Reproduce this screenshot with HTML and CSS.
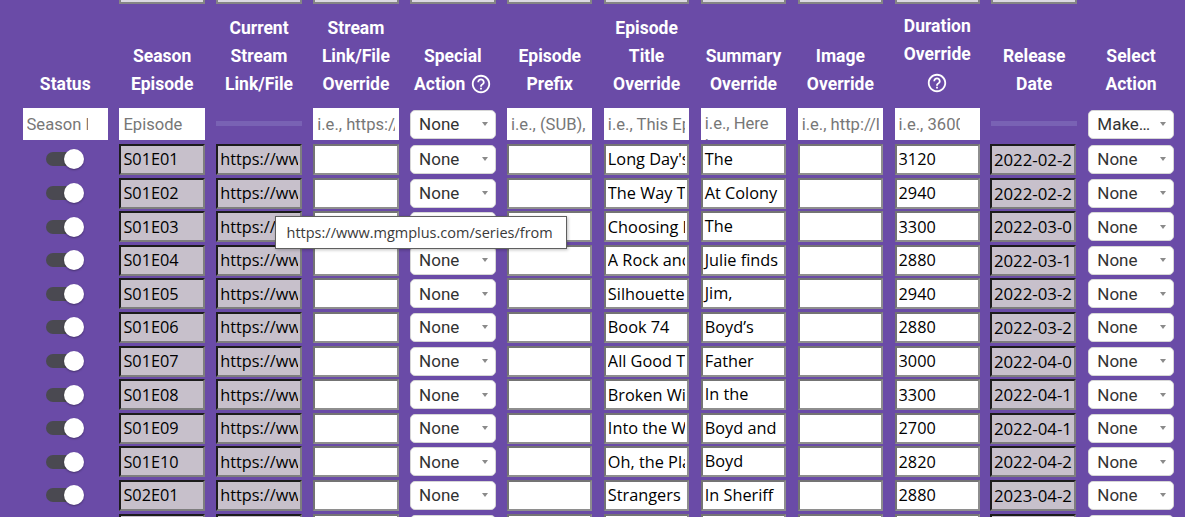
FILE: index.html
```html
<!DOCTYPE html>
<html lang="en">
<head>
<meta charset="utf-8">
<title>Episodes</title>
<link rel="stylesheet" href="styles.css">
</head>
<body>
<div class="table">
  <div class="row stub">
    <div></div>
    <div class="stub-box"></div><div class="stub-box"></div><div class="stub-box"></div><div class="stub-box"></div><div class="stub-box"></div>
    <div class="stub-box"></div><div class="stub-box"></div><div class="stub-box"></div><div class="stub-box"></div><div class="stub-box"></div>
    <div></div>
  </div>

  <div class="row head">
    <div class="th">Status</div>
    <div class="th">Season<br>Episode</div>
    <div class="th">Current<br>Stream<br>Link/File</div>
    <div class="th">Stream<br>Link/File<br>Override</div>
    <div class="th">Special<br>Action <svg class="help" viewBox="0 0 24 24"><path d="M11 18h2v-2h-2v2zm1-16C6.48 2 2 6.48 2 12s4.48 10 10 10 10-4.48 10-10S17.52 2 12 2zm0 18c-4.41 0-8-3.59-8-8s3.59-8 8-8 8 3.59 8 8-3.59 8-8 8zm0-14c-2.21 0-4 1.79-4 4h2c0-1.1.9-2 2-2s2 .9 2 2c0 2-3 1.75-3 5h2c0-2.25 3-2.5 3-5 0-2.21-1.79-4-4-4z"/></svg></div>
    <div class="th">Episode<br>Prefix</div>
    <div class="th">Episode<br>Title<br>Override</div>
    <div class="th">Summary<br>Override</div>
    <div class="th">Image<br>Override</div>
    <div class="th">Duration<br>Override<div class="help-line"><svg class="help" viewBox="0 0 24 24"><path d="M11 18h2v-2h-2v2zm1-16C6.48 2 2 6.48 2 12s4.48 10 10 10 10-4.48 10-10S17.52 2 12 2zm0 18c-4.41 0-8-3.59-8-8s3.59-8 8-8 8 3.59 8 8-3.59 8-8 8zm0-14c-2.21 0-4 1.79-4 4h2c0-1.1.9-2 2-2s2 .9 2 2c0 2-3 1.75-3 5h2c0-2.25 3-2.5 3-5 0-2.21-1.79-4-4-4z"/></svg></div></div>
    <div class="th">Release<br>Date</div>
    <div class="th">Select<br>Action</div>
  </div>

  <div class="row filters">
    <input class="fin num" placeholder="Season Number">
    <input class="fin" placeholder="Episode">
    <div class="bar"></div>
    <input class="fin" placeholder="i.e., https://www.example.com">
    <div class="sel"><span class="sel-text">None</span><span class="caret"></span></div>
    <input class="fin" placeholder="i.e., (SUB), (DUB)">
    <input class="fin" placeholder="i.e., This Episode Title">
    <textarea class="fin fta" placeholder="i.e., Here is a summary"></textarea>
    <input class="fin" placeholder="i.e., http://link.to/image.jpg">
    <input class="fin num" placeholder="i.e., 3600">
    <div class="bar"></div>
    <div class="sel"><span class="sel-text">Make Active</span><span class="caret"></span></div>
  </div>

  <div class="row data">
    <div class="switch"><span class="thumb"></span></div>
    <input class="ro" readonly value="S01E01">
    <input class="ro" readonly value="https://www.mgmplus.com/series/from/s1/e1">
    <input class="in">
    <div class="sel"><span class="sel-text">None</span><span class="caret"></span></div>
    <input class="in">
    <input class="in" value="Long Day's Journey Into Night">
    <textarea class="in ta">The Matthews family takes a detour through a strange town.</textarea>
    <input class="in">
    <input class="in" value="3120">
    <input class="ro date" readonly value="2022-02-20">
    <div class="sel"><span class="sel-text">None</span><span class="caret"></span></div>
  </div>
  <div class="row data">
    <div class="switch"><span class="thumb"></span></div>
    <input class="ro" readonly value="S01E02">
    <input class="ro" readonly value="https://www.mgmplus.com/series/from/s1/e2">
    <input class="in">
    <div class="sel"><span class="sel-text">None</span><span class="caret"></span></div>
    <input class="in">
    <input class="in" value="The Way Things Are Now">
    <textarea class="in ta">At Colony House, the Matthews family settles in.</textarea>
    <input class="in">
    <input class="in" value="2940">
    <input class="ro date" readonly value="2022-02-27">
    <div class="sel"><span class="sel-text">None</span><span class="caret"></span></div>
  </div>
  <div class="row data">
    <div class="switch"><span class="thumb"></span></div>
    <input class="ro" readonly value="S01E03">
    <input class="ro" readonly value="https://www.mgmplus.com/series/from/s1/e3">
    <input class="in">
    <div class="sel"><span class="sel-text">None</span><span class="caret"></span></div>
    <input class="in">
    <input class="in" value="Choosing Day">
    <textarea class="in ta">The townspeople gather for a long-held tradition.</textarea>
    <input class="in">
    <input class="in" value="3300">
    <input class="ro date" readonly value="2022-03-06">
    <div class="sel"><span class="sel-text">None</span><span class="caret"></span></div>
  </div>
  <div class="row data">
    <div class="switch"><span class="thumb"></span></div>
    <input class="ro" readonly value="S01E04">
    <input class="ro" readonly value="https://www.mgmplus.com/series/from/s1/e4">
    <input class="in">
    <div class="sel"><span class="sel-text">None</span><span class="caret"></span></div>
    <input class="in">
    <input class="in" value="A Rock and a Hard Place">
    <textarea class="in ta">Julie finds something unsettling in the woods.</textarea>
    <input class="in">
    <input class="in" value="2880">
    <input class="ro date" readonly value="2022-03-13">
    <div class="sel"><span class="sel-text">None</span><span class="caret"></span></div>
  </div>
  <div class="row data">
    <div class="switch"><span class="thumb"></span></div>
    <input class="ro" readonly value="S01E05">
    <input class="ro" readonly value="https://www.mgmplus.com/series/from/s1/e5">
    <input class="in">
    <div class="sel"><span class="sel-text">None</span><span class="caret"></span></div>
    <input class="in">
    <input class="in" value="Silhouettes">
    <textarea class="in ta">Jim, Tabitha and the kids search for answers.</textarea>
    <input class="in">
    <input class="in" value="2940">
    <input class="ro date" readonly value="2022-03-20">
    <div class="sel"><span class="sel-text">None</span><span class="caret"></span></div>
  </div>
  <div class="row data">
    <div class="switch"><span class="thumb"></span></div>
    <input class="ro" readonly value="S01E06">
    <input class="ro" readonly value="https://www.mgmplus.com/series/from/s1/e6">
    <input class="in">
    <div class="sel"><span class="sel-text">None</span><span class="caret"></span></div>
    <input class="in">
    <input class="in" value="Book 74">
    <textarea class="in ta">Boyd’s investigation leads him deeper into the forest.</textarea>
    <input class="in">
    <input class="in" value="2880">
    <input class="ro date" readonly value="2022-03-27">
    <div class="sel"><span class="sel-text">None</span><span class="caret"></span></div>
  </div>
  <div class="row data">
    <div class="switch"><span class="thumb"></span></div>
    <input class="ro" readonly value="S01E07">
    <input class="ro" readonly value="https://www.mgmplus.com/series/from/s1/e7">
    <input class="in">
    <div class="sel"><span class="sel-text">None</span><span class="caret"></span></div>
    <input class="in">
    <input class="in" value="All Good Things">
    <textarea class="in ta">Father Khatri makes a startling discovery.</textarea>
    <input class="in">
    <input class="in" value="3000">
    <input class="ro date" readonly value="2022-04-03">
    <div class="sel"><span class="sel-text">None</span><span class="caret"></span></div>
  </div>
  <div class="row data">
    <div class="switch"><span class="thumb"></span></div>
    <input class="ro" readonly value="S01E08">
    <input class="ro" readonly value="https://www.mgmplus.com/series/from/s1/e8">
    <input class="in">
    <div class="sel"><span class="sel-text">None</span><span class="caret"></span></div>
    <input class="in">
    <input class="in" value="Broken Windows, Open Doors">
    <textarea class="in ta">In the aftermath of a devastating night, the town regroups.</textarea>
    <input class="in">
    <input class="in" value="3300">
    <input class="ro date" readonly value="2022-04-10">
    <div class="sel"><span class="sel-text">None</span><span class="caret"></span></div>
  </div>
  <div class="row data">
    <div class="switch"><span class="thumb"></span></div>
    <input class="ro" readonly value="S01E09">
    <input class="ro" readonly value="https://www.mgmplus.com/series/from/s1/e9">
    <input class="in">
    <div class="sel"><span class="sel-text">None</span><span class="caret"></span></div>
    <input class="in">
    <input class="in" value="Into the Woods">
    <textarea class="in ta">Boyd and Sara venture beyond the talismans.</textarea>
    <input class="in">
    <input class="in" value="2700">
    <input class="ro date" readonly value="2022-04-17">
    <div class="sel"><span class="sel-text">None</span><span class="caret"></span></div>
  </div>
  <div class="row data">
    <div class="switch"><span class="thumb"></span></div>
    <input class="ro" readonly value="S01E10">
    <input class="ro" readonly value="https://www.mgmplus.com/series/from/s1/e10">
    <input class="in">
    <div class="sel"><span class="sel-text">None</span><span class="caret"></span></div>
    <input class="in">
    <input class="in" value="Oh, the Places You'll Go">
    <textarea class="in ta">Boyd confronts the truth about the town.</textarea>
    <input class="in">
    <input class="in" value="2820">
    <input class="ro date" readonly value="2022-04-24">
    <div class="sel"><span class="sel-text">None</span><span class="caret"></span></div>
  </div>
  <div class="row data">
    <div class="switch"><span class="thumb"></span></div>
    <input class="ro" readonly value="S02E01">
    <input class="ro" readonly value="https://www.mgmplus.com/series/from/s2/e1">
    <input class="in">
    <div class="sel"><span class="sel-text">None</span><span class="caret"></span></div>
    <input class="in">
    <input class="in" value="Strangers in a Strange Land">
    <textarea class="in ta">In Sheriff Boyd's absence, newcomers arrive by bus.</textarea>
    <input class="in">
    <input class="in" value="2880">
    <input class="ro date" readonly value="2023-04-23">
    <div class="sel"><span class="sel-text">None</span><span class="caret"></span></div>
  </div>
  <div class="row data">
    <div class="switch"><span class="thumb"></span></div>
    <input class="ro" readonly value="S02E02">
    <input class="ro" readonly value="https://www.mgmplus.com/series/from/s2/e2">
    <input class="in">
    <div class="sel"><span class="sel-text">None</span><span class="caret"></span></div>
    <input class="in">
    <input class="in" value="Ordinary Angels">
    <textarea class="in ta">Tabitha searches for a way out.</textarea>
    <input class="in">
    <input class="in" value="2940">
    <input class="ro date" readonly value="2023-04-30">
    <div class="sel"><span class="sel-text">None</span><span class="caret"></span></div>
  </div>
</div>

<div class="tooltip">https://www.mgmplus.com/series/from</div>
</body>
</html>
```

FILE: styles.css
```css
html, body {
  margin: 0;
  height: 517px;
  overflow: hidden;
  background: #6a4ba7;
}

.table {
  padding-left: 22.5px;
  font-family: Roboto, "Liberation Sans", sans-serif;
}

.row {
  display: grid;
  grid-template-columns: repeat(12, 85.5px);
  column-gap: 11.4px;
}

/* partial row scrolled off the top */
.stub {
  height: 4px;
  grid-template-rows: 4px;
  overflow: hidden;
  align-items: end;
}
.stub-box {
  height: 31px;
  box-sizing: border-box;
  background: #dcd9e2;
  border: 2px solid #858585;
}

/* header */
.head {
  align-items: end;
  padding: 8px 0 4px;
}
.th {
  color: #fff;
  font-weight: 700;
  font-size: 17.5px;
  line-height: 28px;
  text-align: center;
  white-space: nowrap;
}
.help {
  width: 22px;
  height: 22px;
  fill: #fff;
  vertical-align: -5px;
}
.help-line {
  height: 30px;
  display: flex;
  align-items: center;
  justify-content: center;
}

/* filter row */
.filters {
  height: 40.7px;
  box-sizing: border-box;
  padding-top: 6px;
  align-items: start;
}
.fin {
  box-sizing: border-box;
  width: 100%;
  height: 32px;
  margin: 0;
  border: none;
  background: #fff;
  padding: 0 4px;
  font-family: Roboto, sans-serif;
  font-size: 16.6px;
  color: #222;
  outline: none;
}
.fin.num {
  padding-right: 20px;
}
.fin::placeholder {
  color: #777;
}
.fta {
  resize: none;
  overflow: hidden;
  line-height: 22px;
  padding-top: 5px;
  display: block;
}
.filters .sel {
  margin-top: 1.5px;
}
.bar {
  height: 5px;
  margin-top: 13px;
  background: #7962b4;
}

/* data rows */
.data {
  height: 33.6px;
  align-items: center;
}
.in, .ro {
  box-sizing: border-box;
  width: 100%;
  height: 31px;
  margin: 0;
  padding: 1px 2px;
  border-width: 2px;
  border-style: solid;
  font-family: "Open Sans", "Noto Sans", sans-serif;
  font-size: 16.3px;
  color: #000;
  outline: none;
}
.in {
  background: #fff;
  border-color: #747474 #8e8e8e #8e8e8e #747474;
}
.ro {
  background: #c7c0cb;
  border-color: #1c1c1c #7e7e7e #7e7e7e #1c1c1c;
}
.date {
  margin-left: -1.5px;
  width: calc(100% + 1px);
  font-size: 16.8px;
}
.ta {
  display: block;
  resize: none;
  overflow: hidden;
  line-height: 22px;
  padding-top: 2px;
}

/* select */
.sel {
  box-sizing: border-box;
  height: 29px;
  display: flex;
  align-items: center;
  background: #fff;
  border: 1px solid #d6d6d6;
  border-radius: 5px;
  padding: 0 7px 0 8px;
  font-family: Roboto, sans-serif;
  font-size: 17px;
  color: #333;
}
.sel-text {
  flex: 1;
  min-width: 0;
  white-space: nowrap;
  overflow: hidden;
  text-overflow: ellipsis;
}
.caret {
  flex: none;
  margin-left: 6px;
  width: 0;
  height: 0;
  border-left: 3.5px solid transparent;
  border-right: 3.5px solid transparent;
  border-top: 4px solid #8a8a8a;
}

/* status switch */
.switch {
  position: relative;
  justify-self: center;
  width: 38px;
  height: 20px;
}
.switch::before {
  content: "";
  position: absolute;
  left: 0;
  top: 3px;
  width: 34px;
  height: 14px;
  border-radius: 7px;
  background: #4a4951;
}
.thumb {
  position: absolute;
  left: 18px;
  top: 0;
  width: 20px;
  height: 20px;
  border-radius: 50%;
  background: #fff;
  box-shadow: 0 1px 2px rgba(0, 0, 0, 0.35);
}

/* hover tooltip */
.tooltip {
  position: absolute;
  left: 274.5px;
  top: 216px;
  width: 292px;
  height: 33px;
  box-sizing: border-box;
  padding-left: 11px;
  display: flex;
  align-items: center;
  background: #fff;
  border: 1px solid #5f5f5f;
  box-shadow: 1px 1px 3px rgba(0, 0, 0, 0.25);
  font-family: "Open Sans", "Noto Sans", sans-serif;
  font-size: 14.5px;
  color: #3a3a3a;
  white-space: nowrap;
}
```
